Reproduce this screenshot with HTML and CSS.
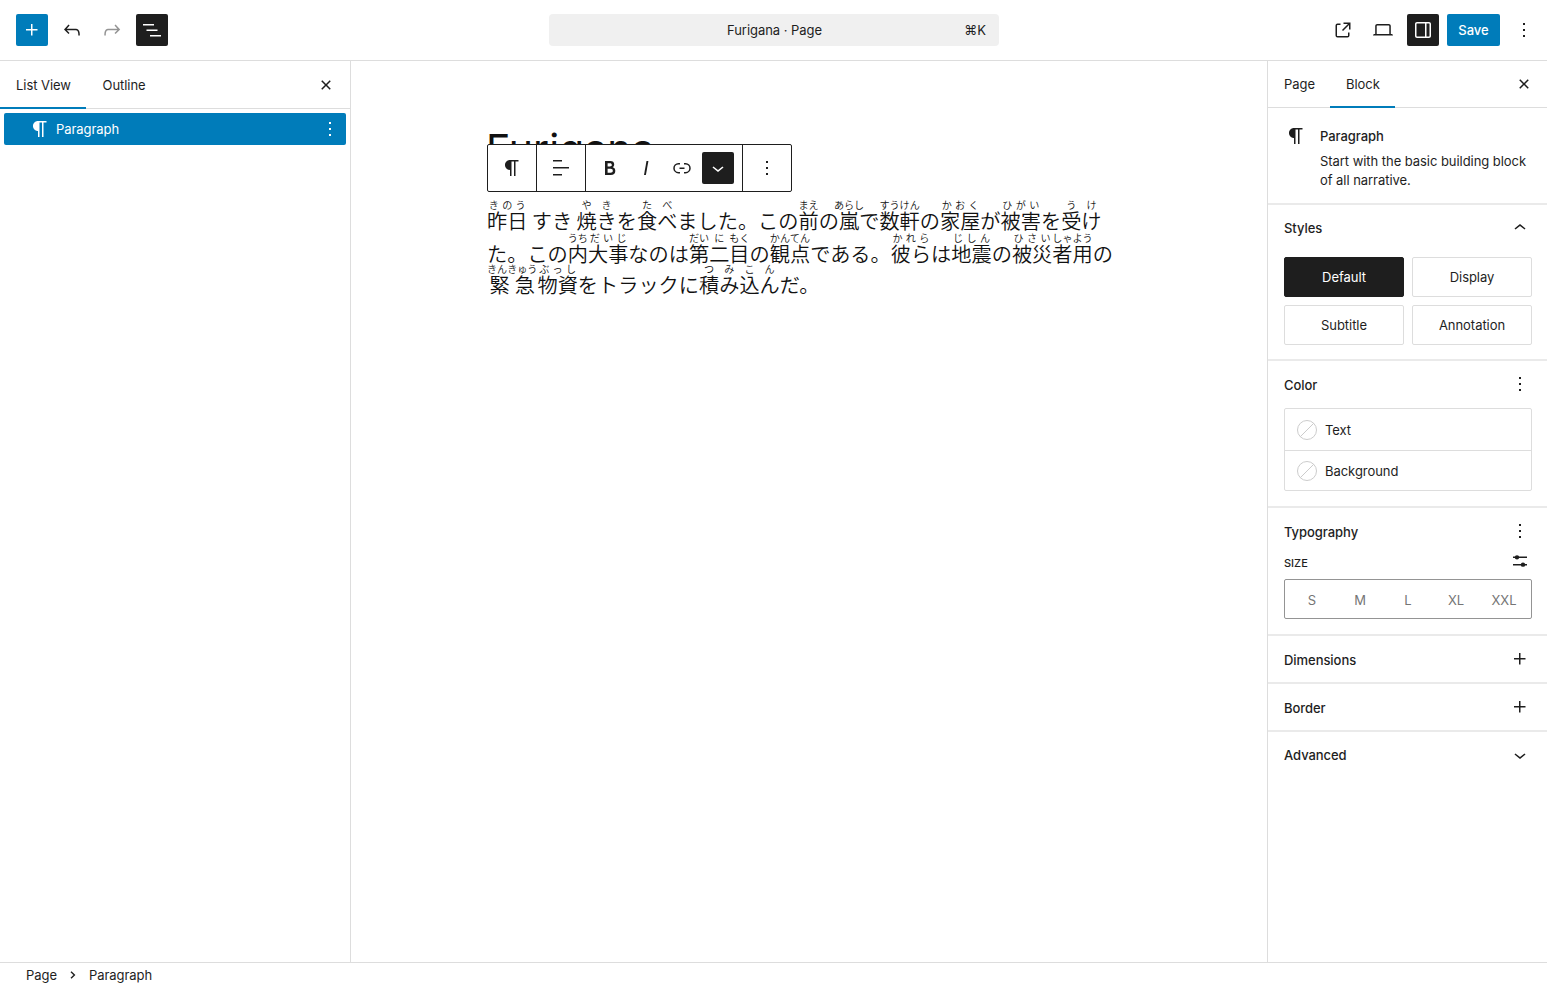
FILE: index.html
```html
<!DOCTYPE html>
<html lang="en">
<head>
<meta charset="utf-8">
<title>Furigana</title>
<link rel="stylesheet" href="styles.css">
</head>
<body>
<svg class="defs" width="0" height="0">
  <symbol id="plus" viewBox="0 0 24 24"><path d="M11 12.5V17.5H12.5V12.5H17.5V11H12.5V6H11V11H6V12.5H11Z"/></symbol>
  <symbol id="undo" viewBox="0 0 24 24"><path d="M18.3 11.7c-.6-.6-1.4-.9-2.3-.9H6.7l2.9-3.3-1.1-1-4.5 5L8.5 16l1-1-2.7-2.7H16c.5 0 .9.2 1.3.5 1 1 1 3.4 1 4.5v.3h1.5v-.2c0-1.5 0-4.3-1.5-5.7z"/></symbol>
  <symbol id="redo" viewBox="0 0 24 24"><path d="M15.6 6.5l-1.1 1 2.9 3.3H8c-.9 0-1.7.3-2.3.9-1.4 1.5-1.4 4.2-1.4 5.6v.2h1.5v-.3c0-1.1 0-3.5 1-4.5.3-.3.7-.5 1.3-.5h9.2L14.5 15l1.1 1.1 4.6-4.6-4.6-5z"/></symbol>
  <symbol id="list" viewBox="0 0 24 24"><path d="M3 6h11v1.5H3V6Zm3.5 5.5h11V13h-11v-1.5ZM21 17H10v1.5h11V17Z"/></symbol>
  <symbol id="close" viewBox="0 0 24 24"><path d="M12 13.06l3.712 3.713 1.061-1.06L13.061 12l3.712-3.712-1.06-1.06L12 10.938 8.288 7.227l-1.061 1.06L10.939 12l-3.712 3.712 1.06 1.061L12 13.061z"/></symbol>
  <symbol id="para" viewBox="0 0 24 24"><path d="m9.996 14v-.225l.004 0v6.225h1.5v-14.5h2.5v14.5h1.5v-14.5h3v-1.5h-8.504c-2.761 0-5 2.239-5 5s2.239 5 5 5z"/></symbol>
  <symbol id="more" viewBox="0 0 24 24"><path d="M13 19h-2v-2h2v2zm0-6h-2v-2h2v2zm0-6h-2V5h2v2z"/></symbol>
  <symbol id="align" viewBox="0 0 24 24"><path d="M13 5.5H4V4h9v1.5Zm7 7H4V11h16v1.5Zm-7 7H4V18h9v1.5Z"/></symbol>
  <symbol id="bold" viewBox="0 0 24 24"><path d="M14.7 11.3c1-.6 1.5-1.6 1.5-3 0-2.3-1.3-3.4-4-3.4H7v14h5.8c1.4 0 2.5-.3 3.3-1 .8-.7 1.2-1.7 1.2-2.9.1-1.9-.8-3.1-2.6-3.7zm-5.1-4h2.3c.6 0 1.1.1 1.4.4.3.3.5.7.5 1.2s-.2 1-.5 1.2c-.3.3-.8.4-1.4.4H9.6V7.3zm4.6 9c-.4.3-1 .4-1.7.4H9.6v-3.9h2.9c.7 0 1.3.2 1.7.5.4.3.6.8.6 1.5s-.2 1.2-.6 1.5z"/></symbol>
  <symbol id="italic" viewBox="0 0 24 24"><path d="M12.5 5L10 19h1.9l2.5-14z"/></symbol>
  <symbol id="link" viewBox="0 0 24 24"><path d="M10 17.389H8.444A5.194 5.194 0 1 1 8.444 7H10v1.5H8.444a3.694 3.694 0 0 0 0 7.389H10v1.5ZM14 7h1.556a5.194 5.194 0 0 1 0 10.39H14v-1.5h1.556a3.694 3.694 0 0 0 0-7.39H14V7Zm-4.5 6h5v-1.5h-5V13Z"/></symbol>
  <symbol id="down" viewBox="0 0 24 24"><path d="M17.5 11.6L12 16l-5.5-4.4.9-1.2L12 14l4.5-3.6 1 1.2z"/></symbol>
  <symbol id="up" viewBox="0 0 24 24"><path d="M6.5 12.4L12 8l5.5 4.4-.9 1.2L12 10l-4.5 3.6-1-1.2z"/></symbol>
  <symbol id="external" viewBox="0 0 24 24"><path d="M19.5 4.5h-7V6h4.44l-5.97 5.97 1.06 1.06L18 7.06v4.44h1.5v-7Zm-13 1a2 2 0 0 0-2 2v10a2 2 0 0 0 2 2h10a2 2 0 0 0 2-2v-3H17v3a.5.5 0 0 1-.5.5h-10a.5.5 0 0 1-.5-.5v-10a.5.5 0 0 1 .5-.5h3V5.5h-3Z"/></symbol>
  <symbol id="desktop" viewBox="0 0 24 24"><path d="M20.5 16h-.7V8c0-1.1-.9-2-2-2H6.2c-1.1 0-2 .9-2 2v8h-.7c-.8 0-1.5.7-1.5 1.5h20c0-.8-.7-1.5-1.5-1.5zM5.7 8c0-.3.2-.5.5-.5h11.6c.3 0 .5.2.5.5v8H5.7V8z"/></symbol>
  <symbol id="drawer" viewBox="0 0 24 24"><path d="M18 4H6c-1.1 0-2 .9-2 2v12c0 1.1.9 2 2 2h12c1.1 0 2-.9 2-2V6c0-1.1-.9-2-2-2zm-4 14.5H6c-.3 0-.5-.2-.5-.5V6c0-.3.2-.5.5-.5h8v13zm4.5-.5c0 .3-.2.5-.5.5h-2.5v-13H18c.3 0 .5.2.5.5v12z"/></symbol>
  <symbol id="sliders" viewBox="0 0 24 24"><path d="M5 7.6h14v1.5H5zM5 14.9h14v1.5H5z"/><circle cx="9" cy="8.35" r="2.2"/><circle cx="15" cy="15.65" r="2.2"/></symbol>
</svg>

<div class="editor">
  <header class="topbar">
    <div class="group">
      <button class="btn primary"><svg><use href="#plus"/></svg></button>
      <button class="btn"><svg><use href="#undo"/></svg></button>
      <button class="btn disabled"><svg><use href="#redo"/></svg></button>
      <button class="btn pressed"><svg><use href="#list"/></svg></button>
    </div>
    <div class="command"><span></span><span class="doc">Furigana · Page</span><span class="kbd">⌘K</span></div>
    <div class="group right">
      <button class="btn"><svg><use href="#external"/></svg></button>
      <button class="btn"><svg><use href="#desktop"/></svg></button>
      <button class="btn pressed"><svg><use href="#drawer"/></svg></button>
      <button class="btn primary save">Save</button>
      <button class="btn"><svg><use href="#more"/></svg></button>
    </div>
  </header>

  <main class="body">
    <aside class="listview">
      <div class="tabs">
        <span class="tab active">List View</span><span class="tab">Outline</span>
        <svg class="x"><use href="#close"/></svg>
      </div>
      <div class="row"><svg><use href="#para"/></svg><span>Paragraph</span><svg class="dots"><use href="#more"/></svg></div>
    </aside>

    <section class="canvas">
      <h1>Furigana</h1>
      <div class="toolbar">
        <div class="cell"><svg><use href="#para"/></svg></div>
        <div class="cell"><svg><use href="#align"/></svg></div>
        <div class="cell format">
          <svg><use href="#bold"/></svg><svg><use href="#italic"/></svg><svg><use href="#link"/></svg>
          <span class="chev"><svg><use href="#down"/></svg></span>
        </div>
        <div class="cell"><svg><use href="#more"/></svg></div>
      </div>
      <div class="text" lang="ja">
        <p class="l1"><ruby>昨日<rt>きのう</rt></ruby> すき <ruby>焼き<rt>やき</rt></ruby>を<ruby>食べ<rt>たべ</rt></ruby>ました。この<ruby>前<rt>まえ</rt></ruby>の<ruby>嵐<rt>あらし</rt></ruby>で<ruby>数軒<rt>すうけん</rt></ruby>の<ruby>家屋<rt>かおく</rt></ruby>が<ruby>被害<rt>ひがい</rt></ruby>を<ruby>受け<rt>うけ</rt></ruby></p>
        <p class="l2">た。この<ruby>内<rt>うち</rt></ruby><ruby>大事<rt>だいじ</rt></ruby>なのは<ruby>第<rt>だい</rt></ruby><ruby>二<rt>に</rt></ruby><ruby>目<rt>もく</rt></ruby>の<ruby>観点<rt>かんてん</rt></ruby>である。<ruby>彼ら<rt>かれら</rt></ruby>は<ruby>地震<rt>じしん</rt></ruby>の<ruby>被災<rt>ひさい</rt></ruby><ruby>者<rt>しゃ</rt></ruby><ruby>用<rt>よう</rt></ruby>の</p>
        <p class="l3"><ruby>緊急<rt>きんきゅう</rt></ruby><ruby>物資<rt>ぶっし</rt></ruby>をトラックに<ruby>積み込ん<rt>つみこん</rt></ruby>だ。</p>
      </div>
    </section>

    <aside class="settings">
      <div class="tabs">
        <span class="tab">Page</span><span class="tab active">Block</span>
        <svg class="x"><use href="#close"/></svg>
      </div>
      <div class="card">
        <svg><use href="#para"/></svg>
        <div><h2>Paragraph</h2><p>Start with the basic building block of all narrative.</p></div>
      </div>
      <div class="panel styles">
        <div class="head"><h2>Styles</h2><svg><use href="#up"/></svg></div>
        <div class="variations">
          <span class="variation on">Default</span><span class="variation">Display</span>
          <span class="variation">Subtitle</span><span class="variation">Annotation</span>
        </div>
      </div>
      <div class="panel color">
        <div class="head"><h2>Color</h2><svg><use href="#more"/></svg></div>
        <div class="colors">
          <div class="item"><svg class="swatch" viewBox="0 0 20 20"><circle cx="10" cy="10" r="9.5"/><path d="M3.3 16.7 16.7 3.3"/></svg>Text</div>
          <div class="item"><svg class="swatch" viewBox="0 0 20 20"><circle cx="10" cy="10" r="9.5"/><path d="M3.3 16.7 16.7 3.3"/></svg>Background</div>
        </div>
      </div>
      <div class="panel typo">
        <div class="head"><h2>Typography</h2><svg><use href="#more"/></svg></div>
        <div class="size"><span>SIZE</span><svg><use href="#sliders"/></svg></div>
        <div class="sizes"><span>S</span><span>M</span><span>L</span><span>XL</span><span>XXL</span></div>
      </div>
      <div class="panel single"><div class="head"><h2>Dimensions</h2><svg><use href="#plus"/></svg></div></div>
      <div class="panel single"><div class="head"><h2>Border</h2><svg><use href="#plus"/></svg></div></div>
      <div class="panel single advanced"><div class="head"><h2>Advanced</h2><svg><use href="#down"/></svg></div></div>
    </aside>
  </main>

  <footer class="crumbs"><span>Page</span><svg viewBox="0 0 6 8"><path d="M1 .8 4.4 4 1 7.2"/></svg><span>Paragraph</span></footer>
</div>
</body>
</html>
```
FILE: styles.css
```css
* { box-sizing: border-box; }
body { margin: 0; background: #fff; color: #1e1e1e; font: 13px/20px Inter, sans-serif; letter-spacing: -0.05px; overflow: hidden; }
h1, h2, p { margin: 0; }
h2 { font-size: 13px; line-height: 20px; font-weight: 500; }
svg { width: 24px; height: 24px; fill: currentColor; flex: none; display: block; }
.defs { position: absolute; width: 0; height: 0; }
.editor { height: 985px; display: flex; flex-direction: column; }

.topbar { height: 61px; border-bottom: 1px solid #ddd; display: grid; grid-template-columns: 1fr 450px 1fr; align-items: center; padding: 0 7px 0 16px; }
.group { display: flex; gap: 8px; }
.right { justify-content: flex-end; }
.btn { width: 32px; height: 32px; padding: 0; border: 0; border-radius: 2px; background: none; color: #1e1e1e; display: flex; align-items: center; justify-content: center; font: 500 13px Inter, sans-serif; }
.primary { background: #007cba; color: #fff; }
.pressed { background: #1e1e1e; color: #fff; }
.disabled { color: #949494; }
.save { width: 53px; }
.command { height: 32px; background: #f0f0f0; border-radius: 4px; display: grid; grid-template-columns: 1fr auto 1fr; align-items: center; padding: 0 13px 0 14px; margin-left: -4px; margin-right: 4px; }
.kbd { text-align: right; }

.body { flex: 1; display: flex; min-height: 0; }
.listview { width: 351px; border-right: 1px solid #ddd; }
.tabs { display: flex; align-items: stretch; border-bottom: 1px solid #ddd; }
.tab { padding: 0 16px; display: flex; align-items: center; }
.tab.active { margin-bottom: -1px; border-bottom: 2px solid #007cba; padding-top: 1px; }
.x { margin-left: auto; align-self: center; }
.listview .tabs { height: 48px; padding-right: 12px; }
.listview .tab.active { width: 86px; white-space: nowrap; }
.listview .tab + .tab { padding-left: 16.5px; }
.row { height: 32px; margin: 4px; background: #007cba; color: #fff; border-radius: 2px; display: flex; align-items: center; padding: 0 4px 0 24px; }
.row span { margin-left: 4px; }
.row .dots { margin-left: auto; }

.canvas { flex: 1; position: relative; padding-left: 136px; }
.canvas h1 { font-size: 41px; font-weight: 400; line-height: 50px; margin-top: 63px; margin-left: -1px; letter-spacing: 0; color: #111; }
.toolbar { position: absolute; left: 136px; top: 83px; height: 48px; border: 1px solid #1e1e1e; border-radius: 2px; background: #fff; display: flex; }
.cell { width: 49px; border-left: 1px solid #1e1e1e; display: flex; align-items: center; justify-content: center; }
.cell:first-child { width: 48px; border-left: 0; }
.format { width: 157px; gap: 12px; justify-content: flex-start; padding-left: 12px; }
.chev { width: 32px; height: 32px; margin-left: -4px; background: #1e1e1e; color: #fff; border-radius: 2px; display: flex; align-items: center; justify-content: center; }
.text { margin-top: 26px; font: 350 20.2px/32px "Noto Sans CJK JP", sans-serif; letter-spacing: 0; color: #111; }
.text p { height: 31px; white-space: nowrap; }
.text .l1 { height: 33px; word-spacing: -0.2px; }
.text rt { font-size: 10.1px; line-height: 10px; }

.settings { width: 280px; border-left: 1px solid #ddd; }
.settings .tabs { height: 47px; padding-right: 11px; }
.settings .tab:first-child { width: 62px; }
.settings .tab.active { width: 65px; }
.card { height: 95px; padding: 16px 15px 0 16px; display: flex; gap: 12px; }
.card h2 { line-height: 25px; }
.card p { line-height: 18.5px; margin-top: 3px; }
.panel { border-top: 2px solid #eaeaea; padding: 0 15px 0 16px; }
.head { height: 46px; display: flex; align-items: center; justify-content: space-between; }
.color h2, .typo h2, .single h2 { padding-top: 2px; }
.advanced h2 { padding-top: 0; }
.styles { height: 156px; }
.variations { display: grid; grid-template-columns: 120px 120px; grid-auto-rows: 40px; gap: 8px; margin-top: 5.5px; }
.variation { border: 1px solid #ddd; border-radius: 2px; display: flex; align-items: center; justify-content: center; padding-top: 1px; }
.variation.on { background: #1e1e1e; border-color: #1e1e1e; color: #fff; }
.color { height: 147px; }
.colors { border: 1px solid #ddd; border-radius: 2px; margin-top: 1px; height: 83px; }
.item { height: 41px; padding: 0 12px; display: flex; align-items: center; gap: 8px; }
.item + .item { border-top: 1px solid #ddd; }
.swatch { width: 20px; height: 20px; fill: none; stroke: #ccc; }
.typo { height: 128px; }
.size { height: 24px; margin-top: -5px; display: flex; align-items: center; justify-content: space-between; font-size: 11px; font-weight: 500; letter-spacing: 0; }
.size span { padding-top: 4px; }
.sizes { height: 40px; margin-top: 6px; border: 1px solid #949494; border-radius: 2px; display: grid; grid-template-columns: repeat(5, 48px); justify-content: center; align-items: center; text-align: center; color: #757575; padding-top: 2px; }
.single { height: 48px; }

.crumbs { height: 23px; border-top: 1px solid #ddd; display: flex; align-items: center; padding: 2px 0 0 26px; }
.crumbs svg { width: 6px; height: 8px; margin: 0 13px; fill: none; stroke: #1e1e1e; stroke-width: 1.4; }
```
